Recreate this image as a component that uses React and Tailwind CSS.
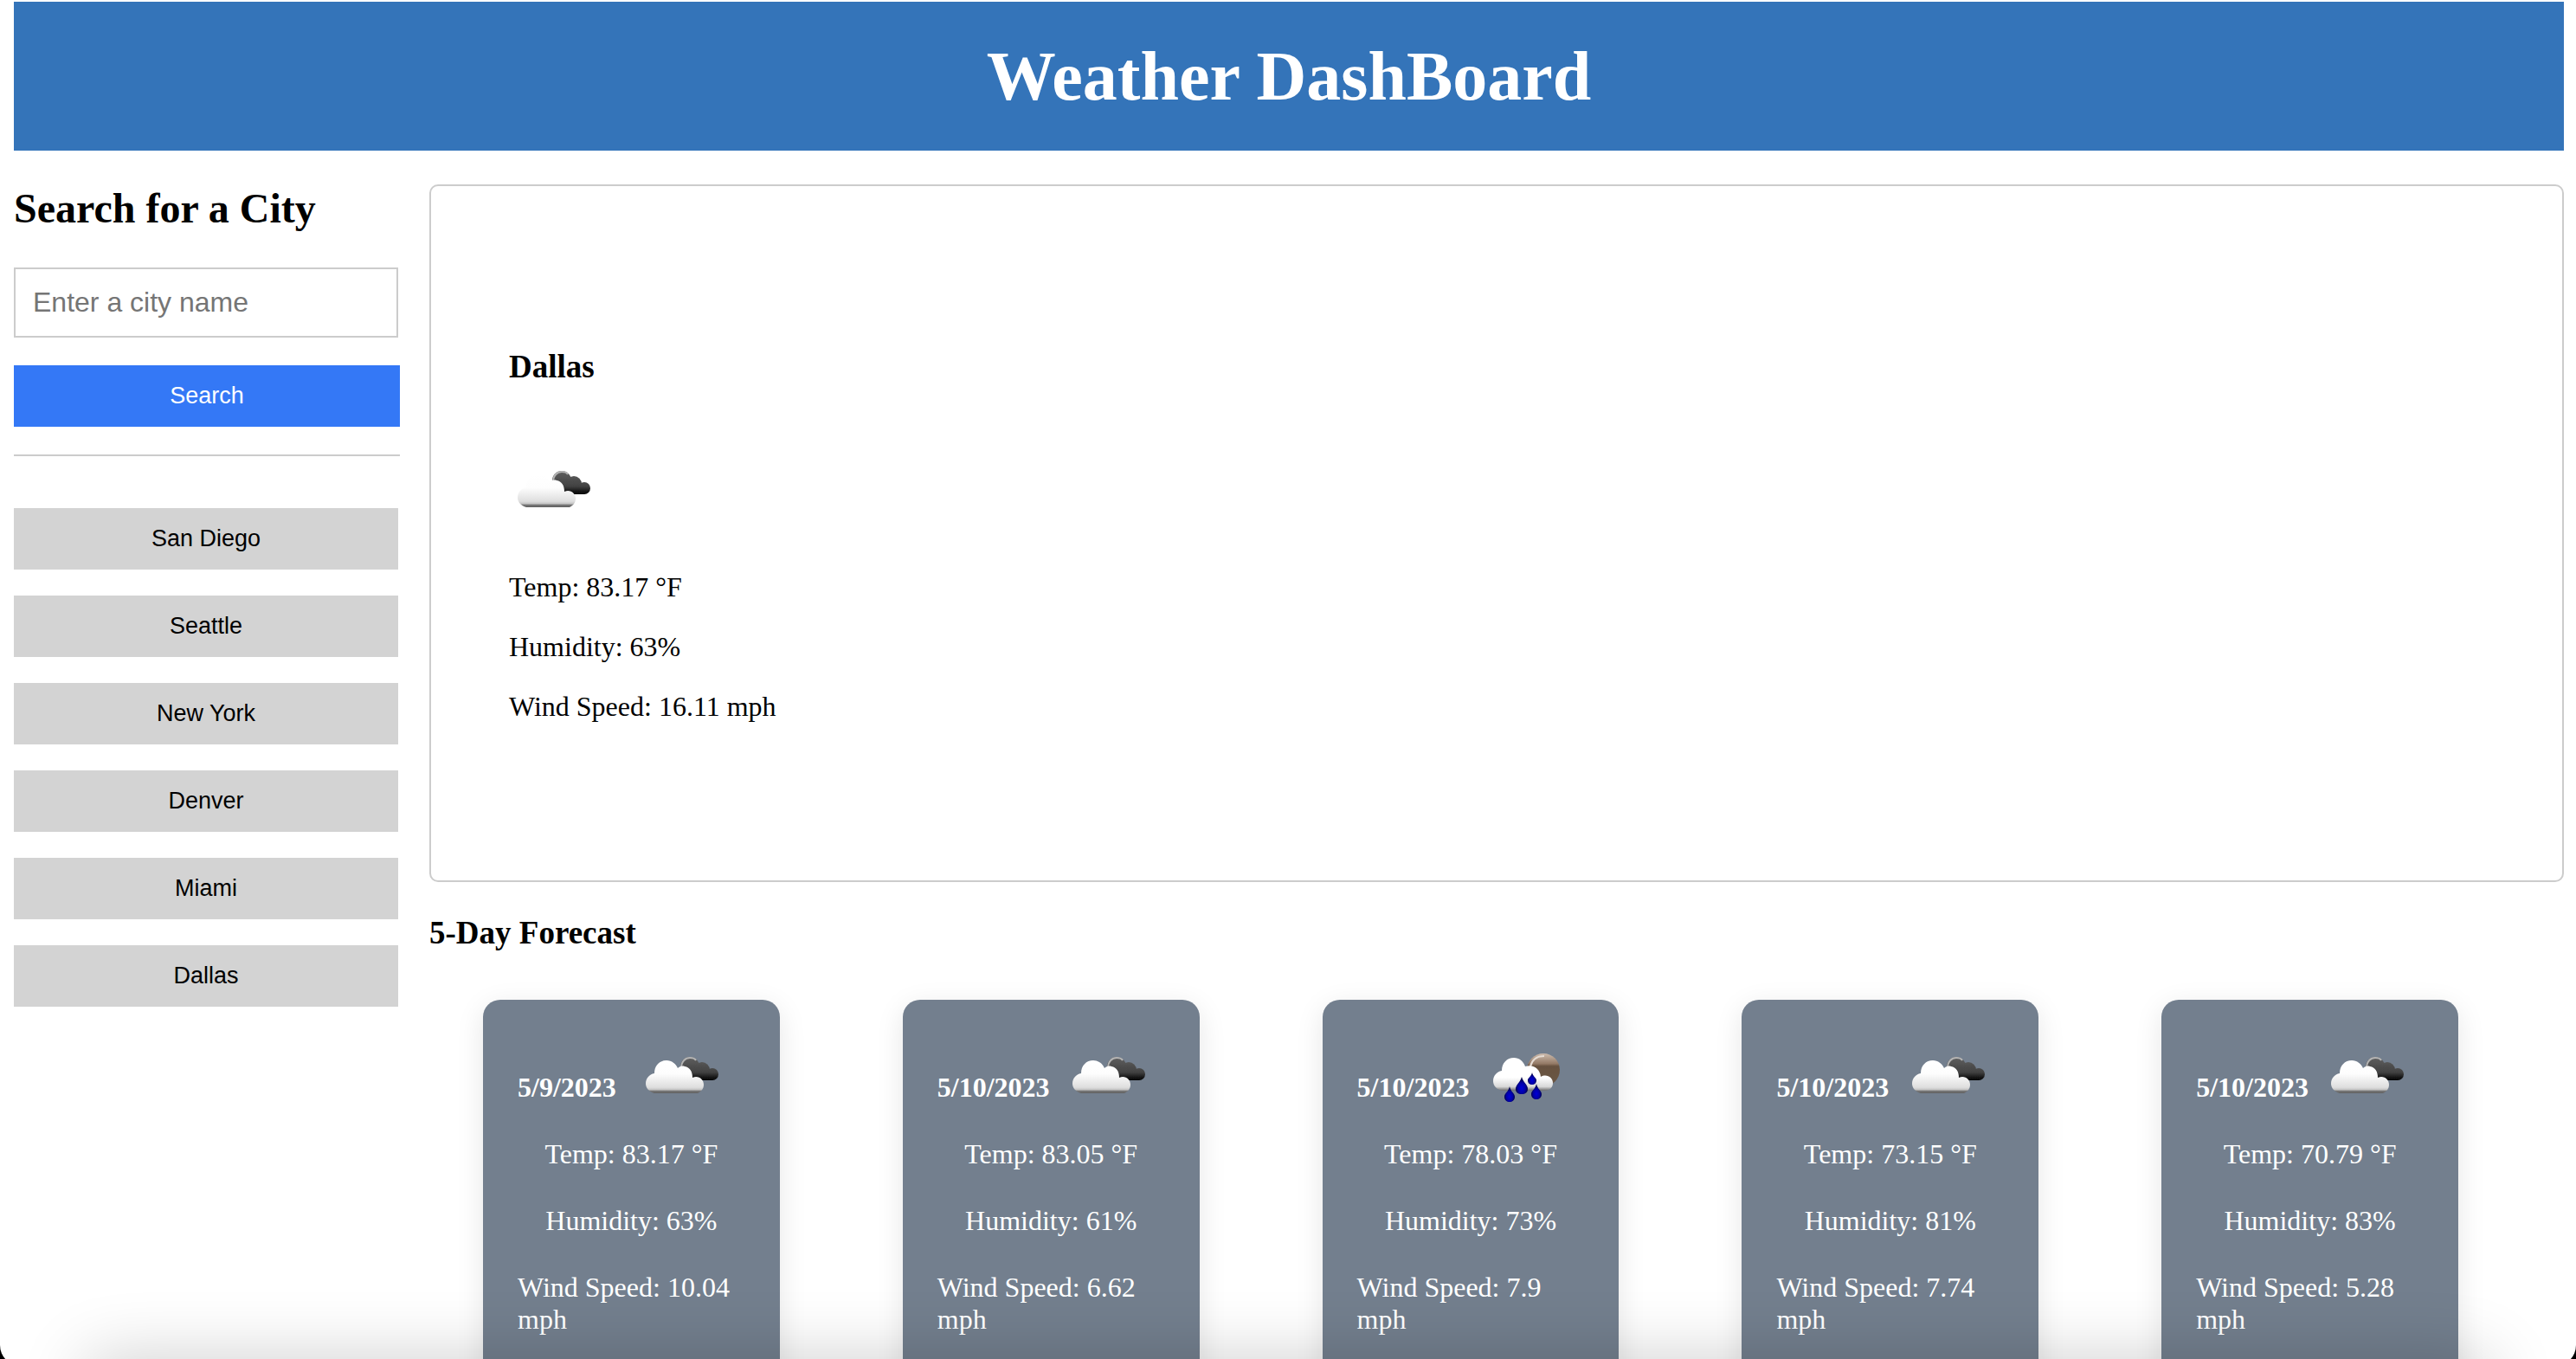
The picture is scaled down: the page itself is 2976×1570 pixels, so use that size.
const cities = ['San Diego', 'Seattle', 'New York', 'Denver', 'Miami', 'Dallas'];

const forecast = [
  { date: '5/9/2023', temp: '83.17', humidity: 63, wind: '10.04', icon: 'clouds' },
  { date: '5/10/2023', temp: '83.05', humidity: 61, wind: '6.62', icon: 'clouds' },
  { date: '5/10/2023', temp: '78.03', humidity: 73, wind: '7.9', icon: 'rain' },
  { date: '5/10/2023', temp: '73.15', humidity: 81, wind: '7.74', icon: 'clouds' },
  { date: '5/10/2023', temp: '70.79', humidity: 83, wind: '5.28', icon: 'clouds' },
];

function CloudsIcon({ id, className = '' }) {
  return (
    <svg viewBox="0 0 100 100" className={`size-[100px] shrink-0 ${className}`} role="img" aria-label="Broken clouds">
      <defs>
        <filter id={`${id}-soft`}>
          <feGaussianBlur stdDeviation="0.7" />
        </filter>
        <linearGradient id={`${id}-front`} x1="0" y1="30" x2="0" y2="69" gradientUnits="userSpaceOnUse">
          <stop offset="0" stopColor="#ffffff" />
          <stop offset="0.4" stopColor="#fdfdfd" />
          <stop offset="0.8" stopColor="#dedede" />
          <stop offset="0.87" stopColor="#c4c4c4" />
          <stop offset="0.91" stopColor="#777777" />
          <stop offset="1" stopColor="#555555" />
        </linearGradient>
        <linearGradient id={`${id}-back`} x1="0" y1="26" x2="0" y2="53" gradientUnits="userSpaceOnUse">
          <stop offset="0" stopColor="#606060" />
          <stop offset="0.65" stopColor="#424242" />
          <stop offset="1" stopColor="#000000" />
        </linearGradient>
      </defs>
      <g filter={`url(#${id}-soft)`}>
        <g fill={`url(#${id}-back)`}>
          <circle cx="61" cy="37" r="11" />
          <circle cx="75" cy="41" r="9" />
          <circle cx="87" cy="46" r="7" />
          <path d="M56 36H75L87 42V53H62Z" />
        </g>
        <path d="M51 39C51 31 56 27 61 27C64 27 67 28 68 30" fill="none" stroke="#b4b4b4" strokeWidth="2" />
        <path
          d="M20 68C14 66 10 62 10 57C10 51 14 46 20 45C20 36 26 30 34 30C40 30 45 34 47 39C49 37 52 36 55 37C61 38 64 43 64 50C71 47 77 52 77 58C77 63 74 66 70 68Z"
          fill={`url(#${id}-front)`}
        />
      </g>
    </svg>
  );
}

function RainIcon({ id, className = '' }) {
  return (
    <svg viewBox="0 0 100 100" className={`size-[100px] shrink-0 ${className}`} role="img" aria-label="Rain showers">
      <defs>
        <filter id={`${id}-soft`}>
          <feGaussianBlur stdDeviation="0.7" />
        </filter>
        <linearGradient id={`${id}-front`} x1="0" y1="27" x2="0" y2="65" gradientUnits="userSpaceOnUse">
          <stop offset="0" stopColor="#ffffff" />
          <stop offset="0.6" stopColor="#ffffff" />
          <stop offset="0.88" stopColor="#d8d8d8" />
          <stop offset="1" stopColor="#6c6c6c" />
        </linearGradient>
        <linearGradient id={`${id}-moon`} x1="0" y1="22" x2="0" y2="59" gradientUnits="userSpaceOnUse">
          <stop offset="0" stopColor="#cdbcae" />
          <stop offset="0.32" stopColor="#947a66" />
          <stop offset="0.4" stopColor="#66513f" />
          <stop offset="1" stopColor="#6b5745" />
        </linearGradient>
        <radialGradient id={`${id}-drop`} cx="0.5" cy="0.65" r="0.5">
          <stop offset="0" stopColor="#0000d8" />
          <stop offset="0.6" stopColor="#0000a8" />
          <stop offset="1" stopColor="#00004c" />
        </radialGradient>
      </defs>
      <g filter={`url(#${id}-soft)`}>
        <circle cx="69" cy="41" r="19" fill={`url(#${id}-moon)`} />
        <path d="M54 37C56 29 62 25 70 25" fill="none" stroke="#e6dcd4" strokeWidth="2" />
        <path
          d="M22 65C15 64 11 59 11 54C11 48 15 43 21 42C21 33 27 27 35 27C41 27 46 31 48 37C57 34 65 39 66 49C73 45 80 50 80 56C80 61 77 64 72 65Z"
          fill={`url(#${id}-front)`}
        />
        <g fill={`url(#${id}-drop)`}>
          <path d="M44 49C46 56 51 58 51 63C51 67 48 69 44 69C40 69 37 67 37 63C37 58 42 56 44 49Z" />
          <path d="M56 44C57 49 61 50 61 53C61 56 59 58 56 58C53 58 51 56 51 53C51 50 55 49 56 44Z" />
          <path d="M30 60C31 66 36 68 36 72C36 76 33 78 30 78C27 78 24 76 24 72C24 68 29 66 30 60Z" />
          <path d="M61 57C62 63 67 65 67 69C67 73 64 75 61 75C58 75 55 73 55 69C55 65 60 63 61 57Z" />
        </g>
      </g>
    </svg>
  );
}

function ForecastCard({ day, index }) {
  const Icon = day.icon === 'rain' ? RainIcon : CloudsIcon;
  return (
    <article className="flex flex-col items-center rounded-[20px] bg-[#737f8e] p-10 text-white shadow-[0_8px_32px_rgba(0,0,0,0.1)]">
      <div className="mb-5 flex w-full">
        <h4 className="mb-5 self-end font-bold">{day.date}</h4>
        <Icon id={`day-${index}`} className="mx-auto" />
      </div>
      <p className="mb-10">Temp: {day.temp} °F</p>
      <p className="mb-10">Humidity: {day.humidity}%</p>
      <p className="mb-10">Wind Speed: {day.wind} mph</p>
    </article>
  );
}

export default function App() {
  return (
    <div className="relative h-screen overflow-hidden bg-white pt-[2px] pr-[14px] pl-4 font-['Liberation_Serif',serif] text-[32px] leading-[37px] text-black">
      <header className="bg-[#3474b9] py-10 text-center text-white">
        <h1 className="text-[80px] leading-[92px] font-bold">Weather DashBoard</h1>
      </header>

      <div className="mt-[39px] flex items-start gap-[34px]">
        <aside className="flex w-[446px] shrink-0 flex-col font-['Liberation_Sans',sans-serif] text-[27px] leading-[31px]">
          <form onSubmit={(event) => event.preventDefault()} className="flex flex-col">
            <label htmlFor="city" className="mb-[41px] font-['Liberation_Serif',serif] text-[48px] leading-[55px] font-bold">
              Search for a City
            </label>
            <input
              id="city"
              type="text"
              placeholder="Enter a city name"
              className="mr-[2px] mb-8 h-[81px] border-2 border-[#cccccc] px-5 text-[32px] placeholder:text-[#757575]"
            />
            <button type="submit" className="bg-[#3478f6] py-5 text-white">
              Search
            </button>
          </form>
          <hr className="mt-8 border-t-2 border-[#cccccc]" />
          <div className="mt-[60px] mr-[2px] flex flex-col gap-[30px]">
            {cities.map((city) => (
              <button key={city} type="button" className="bg-[#d3d3d3] py-5">
                {city}
              </button>
            ))}
          </div>
        </aside>

        <main className="min-w-0 flex-1">
          <section className="rounded-[10px] border-2 border-[#cccccc] px-[90px] pt-[187px] pb-[182px]">
            <h3 className="text-[37px] leading-[43px] font-bold">Dallas</h3>
            <CloudsIcon id="current" className="mt-[73px] mb-[42px]" />
            <div className="flex flex-col gap-8">
              <p>Temp: 83.17 °F</p>
              <p>Humidity: 63%</p>
              <p>Wind Speed: 16.11 mph</p>
            </div>
          </section>

          <h3 className="mt-[37px] text-[37px] leading-[43px] font-bold">5-Day Forecast</h3>
          <section className="mt-14 grid grid-cols-5 gap-[142px] pr-[122px] pl-[62px]">
            {forecast.map((day, index) => (
              <ForecastCard key={index} day={day} index={index} />
            ))}
          </section>
        </main>
      </div>

      {/* Shade along the bottom edge of the window, and its rounded corners */}
      <div className="pointer-events-none absolute inset-x-[100px] top-full h-20 shadow-[0_0_80px_rgba(0,0,0,0.2)]" />
      <div className="pointer-events-none absolute inset-x-0 bottom-0 h-5 overflow-hidden">
        <div className="-mb-3 h-7 rounded-b-[24px] shadow-[0_0_0_20px_#000000]" />
      </div>
    </div>
  );
}
